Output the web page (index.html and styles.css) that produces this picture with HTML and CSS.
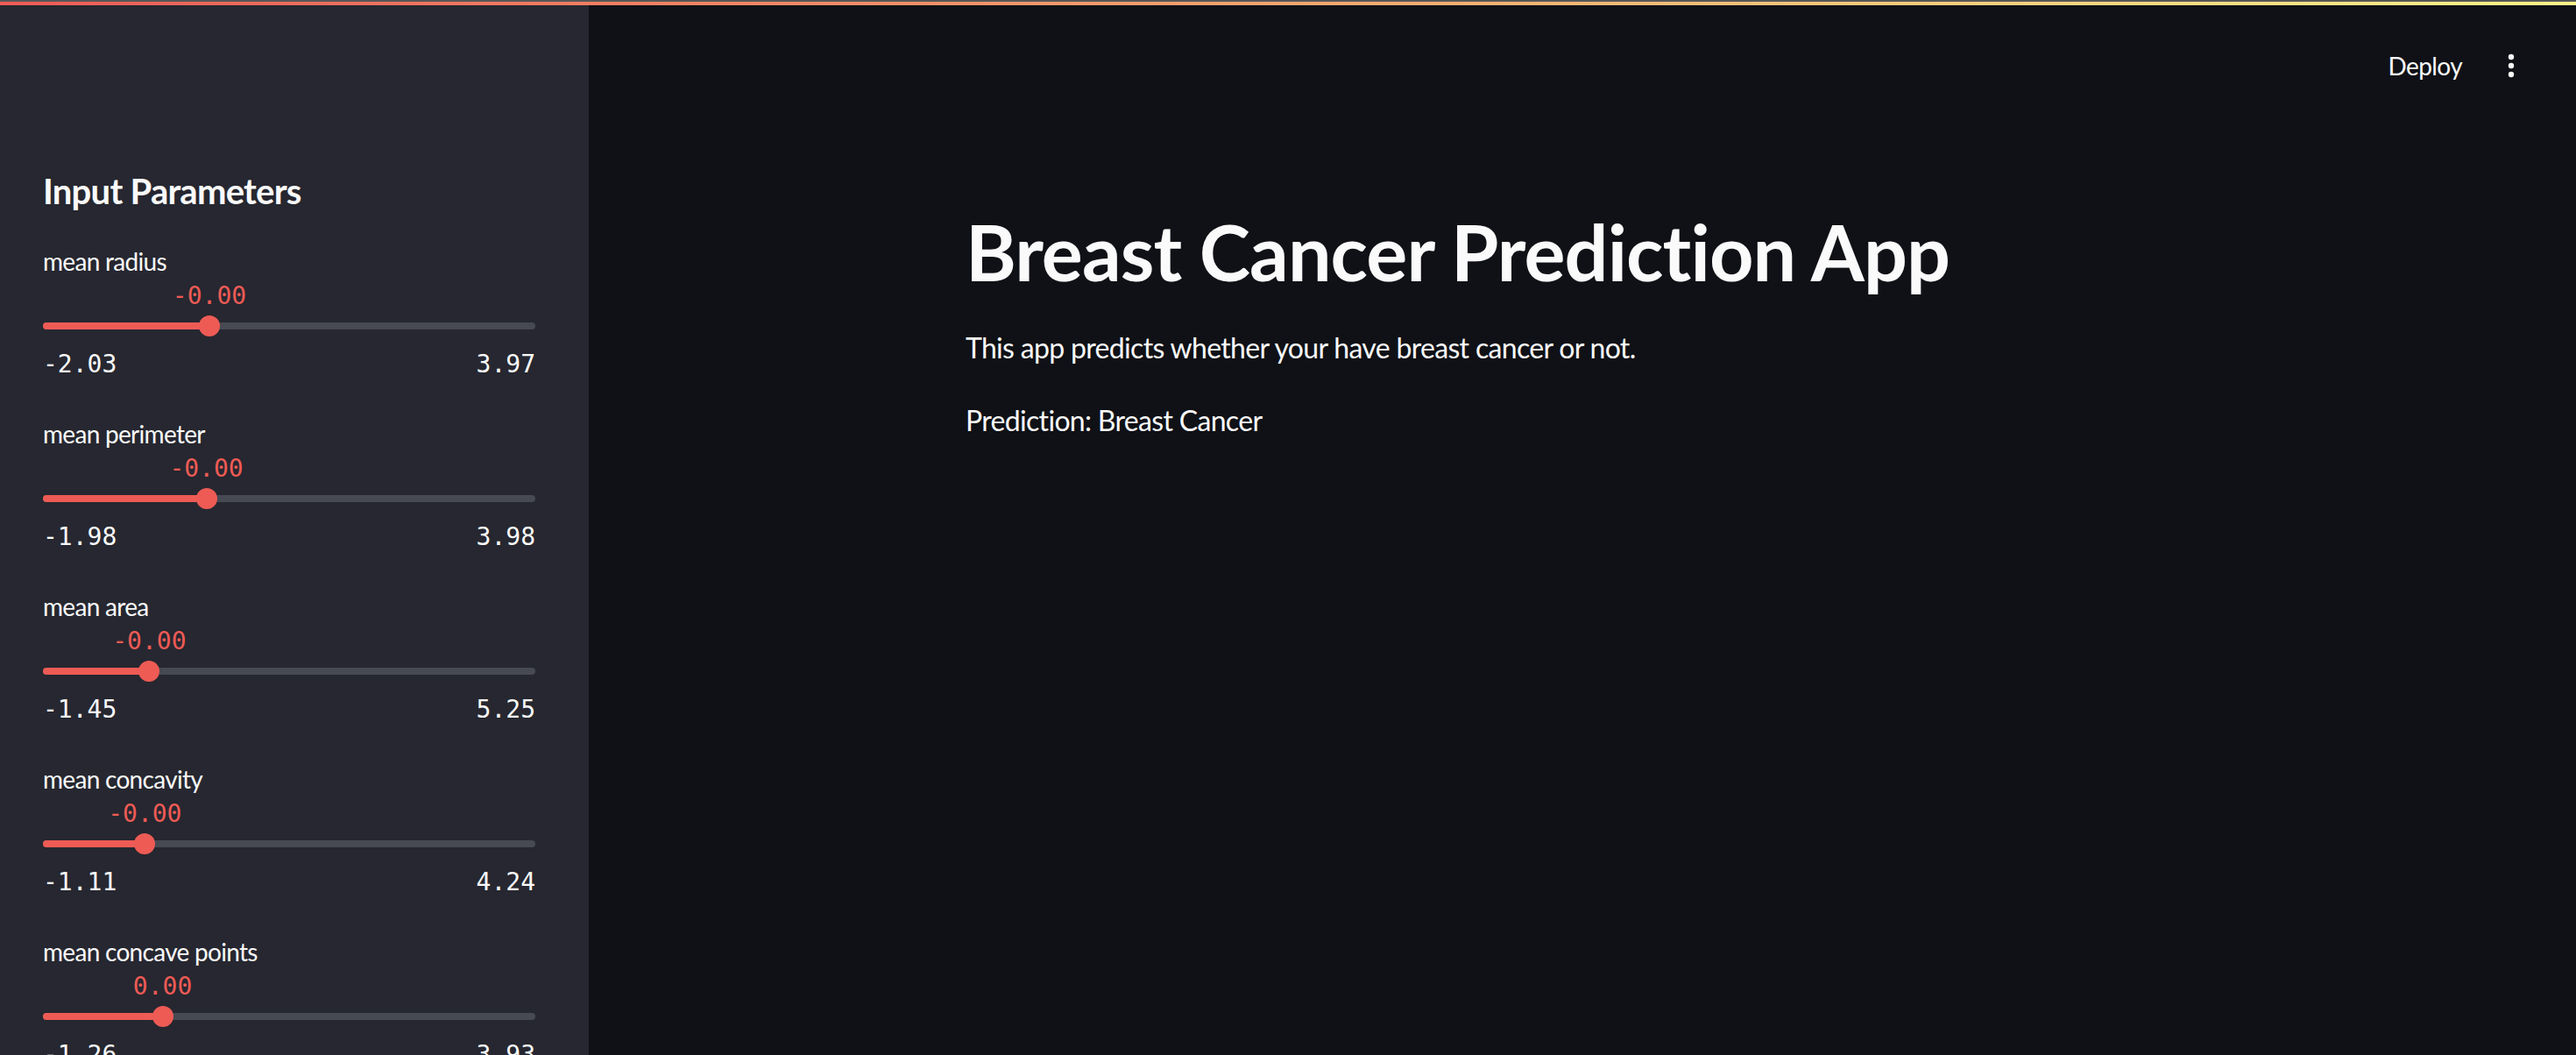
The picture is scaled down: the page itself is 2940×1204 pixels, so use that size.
FILE: index.html
```html
<!DOCTYPE html>
<html lang="en">
<head>
<meta charset="utf-8">
<title>Breast Cancer Prediction App</title>
<link rel="stylesheet" href="styles.css">
</head>
<body>
<div class="decoration"></div>
<div class="app">
  <aside class="sidebar">
    <h2 class="side-title">Input Parameters</h2>
    <div class="sliders">
      <div class="slider">
        <div class="slider-label">mean radius</div>
        <div class="slider-body">
          <div class="track">
            <div class="fill" style="width:33.8%"></div>
            <div class="thumb-wrap" style="left:33.8%">
              <span class="value">-0.00</span>
              <span class="thumb"></span>
            </div>
          </div>
        </div>
        <div class="ticks"><span>-2.03</span><span>3.97</span></div>
      </div>
      <div class="slider">
        <div class="slider-label">mean perimeter</div>
        <div class="slider-body">
          <div class="track">
            <div class="fill" style="width:33.2%"></div>
            <div class="thumb-wrap" style="left:33.2%">
              <span class="value">-0.00</span>
              <span class="thumb"></span>
            </div>
          </div>
        </div>
        <div class="ticks"><span>-1.98</span><span>3.98</span></div>
      </div>
      <div class="slider">
        <div class="slider-label">mean area</div>
        <div class="slider-body">
          <div class="track">
            <div class="fill" style="width:21.6%"></div>
            <div class="thumb-wrap" style="left:21.6%">
              <span class="value">-0.00</span>
              <span class="thumb"></span>
            </div>
          </div>
        </div>
        <div class="ticks"><span>-1.45</span><span>5.25</span></div>
      </div>
      <div class="slider">
        <div class="slider-label">mean concavity</div>
        <div class="slider-body">
          <div class="track">
            <div class="fill" style="width:20.7%"></div>
            <div class="thumb-wrap" style="left:20.7%">
              <span class="value">-0.00</span>
              <span class="thumb"></span>
            </div>
          </div>
        </div>
        <div class="ticks"><span>-1.11</span><span>4.24</span></div>
      </div>
      <div class="slider">
        <div class="slider-label">mean concave points</div>
        <div class="slider-body">
          <div class="track">
            <div class="fill" style="width:24.3%"></div>
            <div class="thumb-wrap" style="left:24.3%">
              <span class="value">0.00</span>
              <span class="thumb"></span>
            </div>
          </div>
        </div>
        <div class="ticks"><span>-1.26</span><span>3.93</span></div>
      </div>
    </div>
  </aside>
  <main class="main">
    <header class="topbar">
      <button class="deploy">Deploy</button>
      <button class="menu" aria-label="Main menu">
        <svg width="12" height="32" viewBox="0 0 12 32"><circle cx="6" cy="6" r="3.2" fill="#fafafa"/><circle cx="6" cy="16" r="3.2" fill="#fafafa"/><circle cx="6" cy="26" r="3.2" fill="#fafafa"/></svg>
      </button>
    </header>
    <section class="content">
      <h1 class="title">Breast Cancer Prediction App</h1>
      <p class="text">This app predicts whether your have breast cancer or not.</p>
      <p class="text">Prediction: Breast Cancer</p>
    </section>
  </main>
</div>
</body>
</html>
```
FILE: styles.css
```css
html, body {
  margin: 0;
  padding: 0;
  height: 100%;
}
body {
  background: #0f1116;
  color: #fafafa;
  font-family: "Lato", "Noto Sans", sans-serif;
  font-variant-ligatures: none;
  overflow: hidden;
}
.decoration {
  position: fixed;
  top: 0;
  left: 0;
  right: 0;
  height: 4px;
  border-top: 2px solid #575757;
  background: linear-gradient(90deg, #ee5c57 0%, #f3a56f 50%, #fcf38a 100%);
  z-index: 10;
}
.app {
  display: flex;
  height: 100vh;
}
.sidebar {
  width: 672px;
  flex: none;
  box-sizing: border-box;
  background: #262730;
  padding: 194px 61px 0 49px;
  overflow: hidden;
}
.side-title {
  margin: 0;
  font-size: 40px;
  line-height: 48px;
  font-weight: 700;
  letter-spacing: -0.75px;
}
.sliders {
  display: flex;
  flex-direction: column;
  gap: 39px;
  margin-top: 36px;
}
.slider-label {
  font-size: 28px;
  line-height: 40px;
  letter-spacing: -0.7px;
}
.slider-body {
  padding-top: 40px;
  height: 28px;
  display: flex;
  align-items: center;
}
.track {
  position: relative;
  flex: 1;
  height: 8px;
  border-radius: 4px;
  background: #474953;
}
.fill {
  height: 100%;
  border-radius: 4px;
  background: #ee5b55;
}
.thumb-wrap {
  position: absolute;
  top: 50%;
  width: 0;
  height: 0;
}
.thumb {
  position: absolute;
  left: -12px;
  top: -12px;
  width: 24px;
  height: 24px;
  border-radius: 50%;
  background: #ee5b55;
}
.value {
  position: absolute;
  bottom: 14px;
  left: 0;
  transform: translateX(-50%);
  font-family: "DejaVu Sans Mono", "Liberation Mono", monospace;
  font-size: 28px;
  line-height: 40px;
  color: #ee5b55;
  white-space: nowrap;
}
.ticks {
  display: flex;
  justify-content: space-between;
  margin-top: 10px;
  font-family: "DejaVu Sans Mono", "Liberation Mono", monospace;
  font-size: 28px;
  line-height: 40px;
  color: #fafafa;
}
.main {
  flex: 1;
  display: flex;
  flex-direction: column;
  min-width: 0;
}
.topbar {
  height: 150px;
  display: flex;
  justify-content: flex-end;
  align-items: center;
  gap: 50px;
  padding-right: 68px;
}
.deploy, .menu {
  background: none;
  border: none;
  color: #fafafa;
  font-family: inherit;
  padding: 0;
  cursor: pointer;
}
.deploy {
  font-size: 28px;
  line-height: 40px;
  letter-spacing: -0.6px;
}
.menu {
  display: flex;
  align-items: center;
}
.content {
  width: 1408px;
  margin: 0 auto;
  padding-top: 84px;
}
.title {
  margin: 0 0 31px;
  font-size: 88px;
  line-height: 106px;
  font-weight: 700;
  letter-spacing: -0.9px;
}
.text {
  margin: 0 0 32px;
  font-size: 32px;
  line-height: 51px;
  letter-spacing: -0.68px;
}
```
